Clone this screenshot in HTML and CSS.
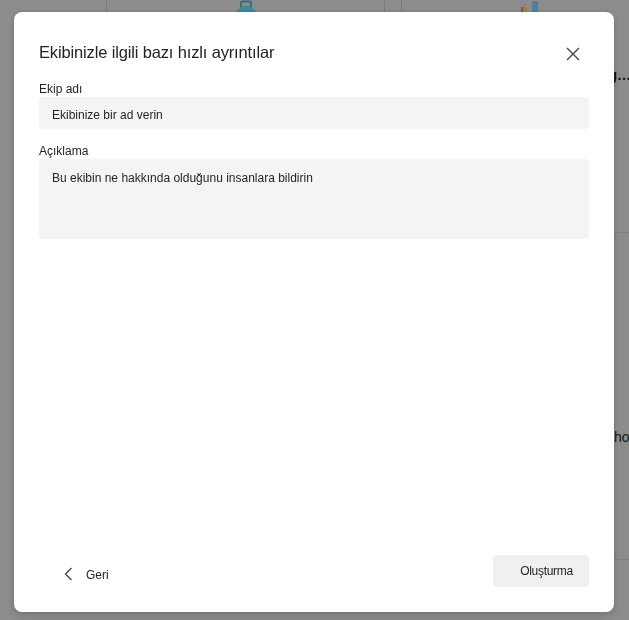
FILE: index.html
```html
<!DOCTYPE html>
<html lang="tr">
<head>
<meta charset="utf-8">
<title>Ekip oluştur</title>
<link rel="stylesheet" href="styles.css">
</head>
<body>
  <main class="page">
    <div class="cards">
      <article class="card plain"></article>
      <article class="card">
        <div class="card-art">
          <svg width="30" height="14" viewBox="0 0 30 14">
            <rect x="10" y="1.5" width="10" height="6" rx="1.5" fill="none" stroke="#48abc5" stroke-width="2"/>
            <ellipse cx="15" cy="22" rx="13" ry="16" fill="#5ed4ea"/>
          </svg>
        </div>
      </article>
      <article class="card">
        <div class="card-art shifted">
          <svg width="30" height="14" viewBox="0 0 30 14">
            <rect x="5" y="7" width="3" height="7" fill="#f07070"/>
            <rect x="7" y="4" width="3" height="10" fill="#f0b8c4"/>
            <rect x="8.5" y="8" width="3" height="6" fill="#f5d040"/>
            <rect x="16" y="1" width="6" height="13" rx="1.5" fill="#70c4f8"/>
          </svg>
        </div>
        <h3 class="card-title"><span>Kuruluş içi iletişim ve org…</span></h3>
      </article>

      <article class="card lower plain"></article>
      <article class="card lower"></article>
      <article class="card lower">
        <p class="card-text">holding bilgilerini paylaşın</p>
      </article>
    </div>
  </main>

  <div class="overlay"></div>

  <section class="dialog" role="dialog" aria-labelledby="dlg-title">
    <header class="dialog-head">
      <h2 id="dlg-title" class="dialog-title">Ekibinizle ilgili bazı hızlı ayrıntılar</h2>
      <button class="icon-btn" aria-label="Kapat">
        <svg width="14" height="14" viewBox="0 0 14 14">
          <path d="M1 1 L13 13 M13 1 L1 13" stroke="#424242" stroke-width="1.3" fill="none"/>
        </svg>
      </button>
    </header>

    <label class="field-label" for="team-name">Ekip adı</label>
    <div class="input" id="team-name">Ekibinize bir ad verin</div>

    <label class="field-label second" for="team-desc">Açıklama</label>
    <div class="textarea" id="team-desc">Bu ekibin ne hakkında olduğunu insanlara bildirin</div>

    <footer class="dialog-foot">
      <button class="back-btn">
        <svg width="9" height="14" viewBox="0 0 9 14">
          <path d="M7.5 1 L1.5 7 L7.5 13" stroke="#424242" stroke-width="1.3" fill="none"/>
        </svg>
        <span>Geri</span>
      </button>
      <button class="create-btn">Oluşturma</button>
    </footer>
  </section>
</body>
</html>
```

FILE: styles.css
```css
* {
  box-sizing: border-box;
}

html, body {
  margin: 0;
  height: 100%;
}

body {
  font-family: "Segoe UI", "Liberation Sans", Arial, sans-serif;
  color: #242424;
  background: #d8d8d8;
  overflow: hidden;
}

/* underlying template gallery */
.page {
  height: 100%;
  overflow: hidden;
}

.cards {
  display: grid;
  grid-template-columns: repeat(3, 279px);
  grid-template-rows: 233px 327px;
  column-gap: 16px;
  margin-left: -189px;
}

.card {
  border-left: 1px solid #bcbcbc;
  border-right: 1px solid #bcbcbc;
  border-bottom: 1px solid #c4c4c4;
}

.card.lower {
  border-left: 0;
  border-right: 0;
}

.card.plain {
  border: 0;
}

.card-art {
  height: 14px;
  display: flex;
  justify-content: center;
  overflow: hidden;
}

.card-art.shifted {
  padding-right: 20px;
}

.card-art svg {
  display: block;
}

.card-title {
  margin: 52px 0 0 16px;
  width: 213px;
  display: flex;
  justify-content: flex-end;
  overflow: hidden;
  font-size: 14px;
  font-weight: 700;
  line-height: 18px;
  color: #1a1a1a;
  white-space: nowrap;
}

.card-title span {
  flex: none;
}

.card-text {
  margin: 195px 0 0 213px;
  font-size: 14px;
  line-height: 18px;
  color: #2a2a2a;
  white-space: nowrap;
}

.overlay {
  position: fixed;
  inset: 0;
  background: rgba(0, 0, 0, 0.35);
}

/* dialog */
.dialog {
  position: fixed;
  left: 14px;
  top: 12px;
  width: 600px;
  height: 600px;
  background: #fff;
  border-radius: 8px;
  box-shadow: 0 0 4px rgba(0, 0, 0, 0.12), 0 4px 10px rgba(0, 0, 0, 0.14);
  padding: 28px 25px 25px 25px;
  display: flex;
  flex-direction: column;
}

.dialog-head {
  display: flex;
  justify-content: space-between;
  align-items: center;
  height: 24px;
}

.dialog-title {
  margin: 0;
  font-size: 16.5px;
  font-weight: 400;
  line-height: 24px;
  letter-spacing: -0.15px;
}

.icon-btn {
  border: 0;
  background: none;
  padding: 0;
  margin: 3px 9px 0 0;
  width: 14px;
  height: 14px;
  display: flex;
}

.field-label {
  display: block;
  font-size: 12px;
  line-height: 16px;
  margin-top: 17px;
}

.field-label.second {
  margin-top: 14px;
}

.input,
.textarea {
  background: #f4f4f4;
  border-radius: 4px;
  font-size: 12px;
  padding: 0 13px;
}

.input {
  height: 32px;
  line-height: 18px;
  padding-top: 9px;
}

.textarea {
  height: 80px;
  line-height: 18px;
  padding-top: 10px;
}

.dialog-foot {
  margin-top: auto;
  display: flex;
  justify-content: space-between;
  align-items: center;
}

.back-btn {
  border: 0;
  background: none;
  font: inherit;
  font-size: 12px;
  color: #242424;
  display: flex;
  align-items: center;
  gap: 13px;
  padding: 0 0 0 25px;
  margin-top: 6px;
}

.back-btn span {
  margin-top: 2px;
}

.back-btn svg {
  display: block;
}

.create-btn {
  border: 0;
  border-radius: 4px;
  background: #f0f0f0;
  font: inherit;
  font-size: 12px;
  letter-spacing: -0.3px;
  color: #242424;
  width: 96px;
  height: 32px;
  padding: 0 0 0 11px;
}
```
